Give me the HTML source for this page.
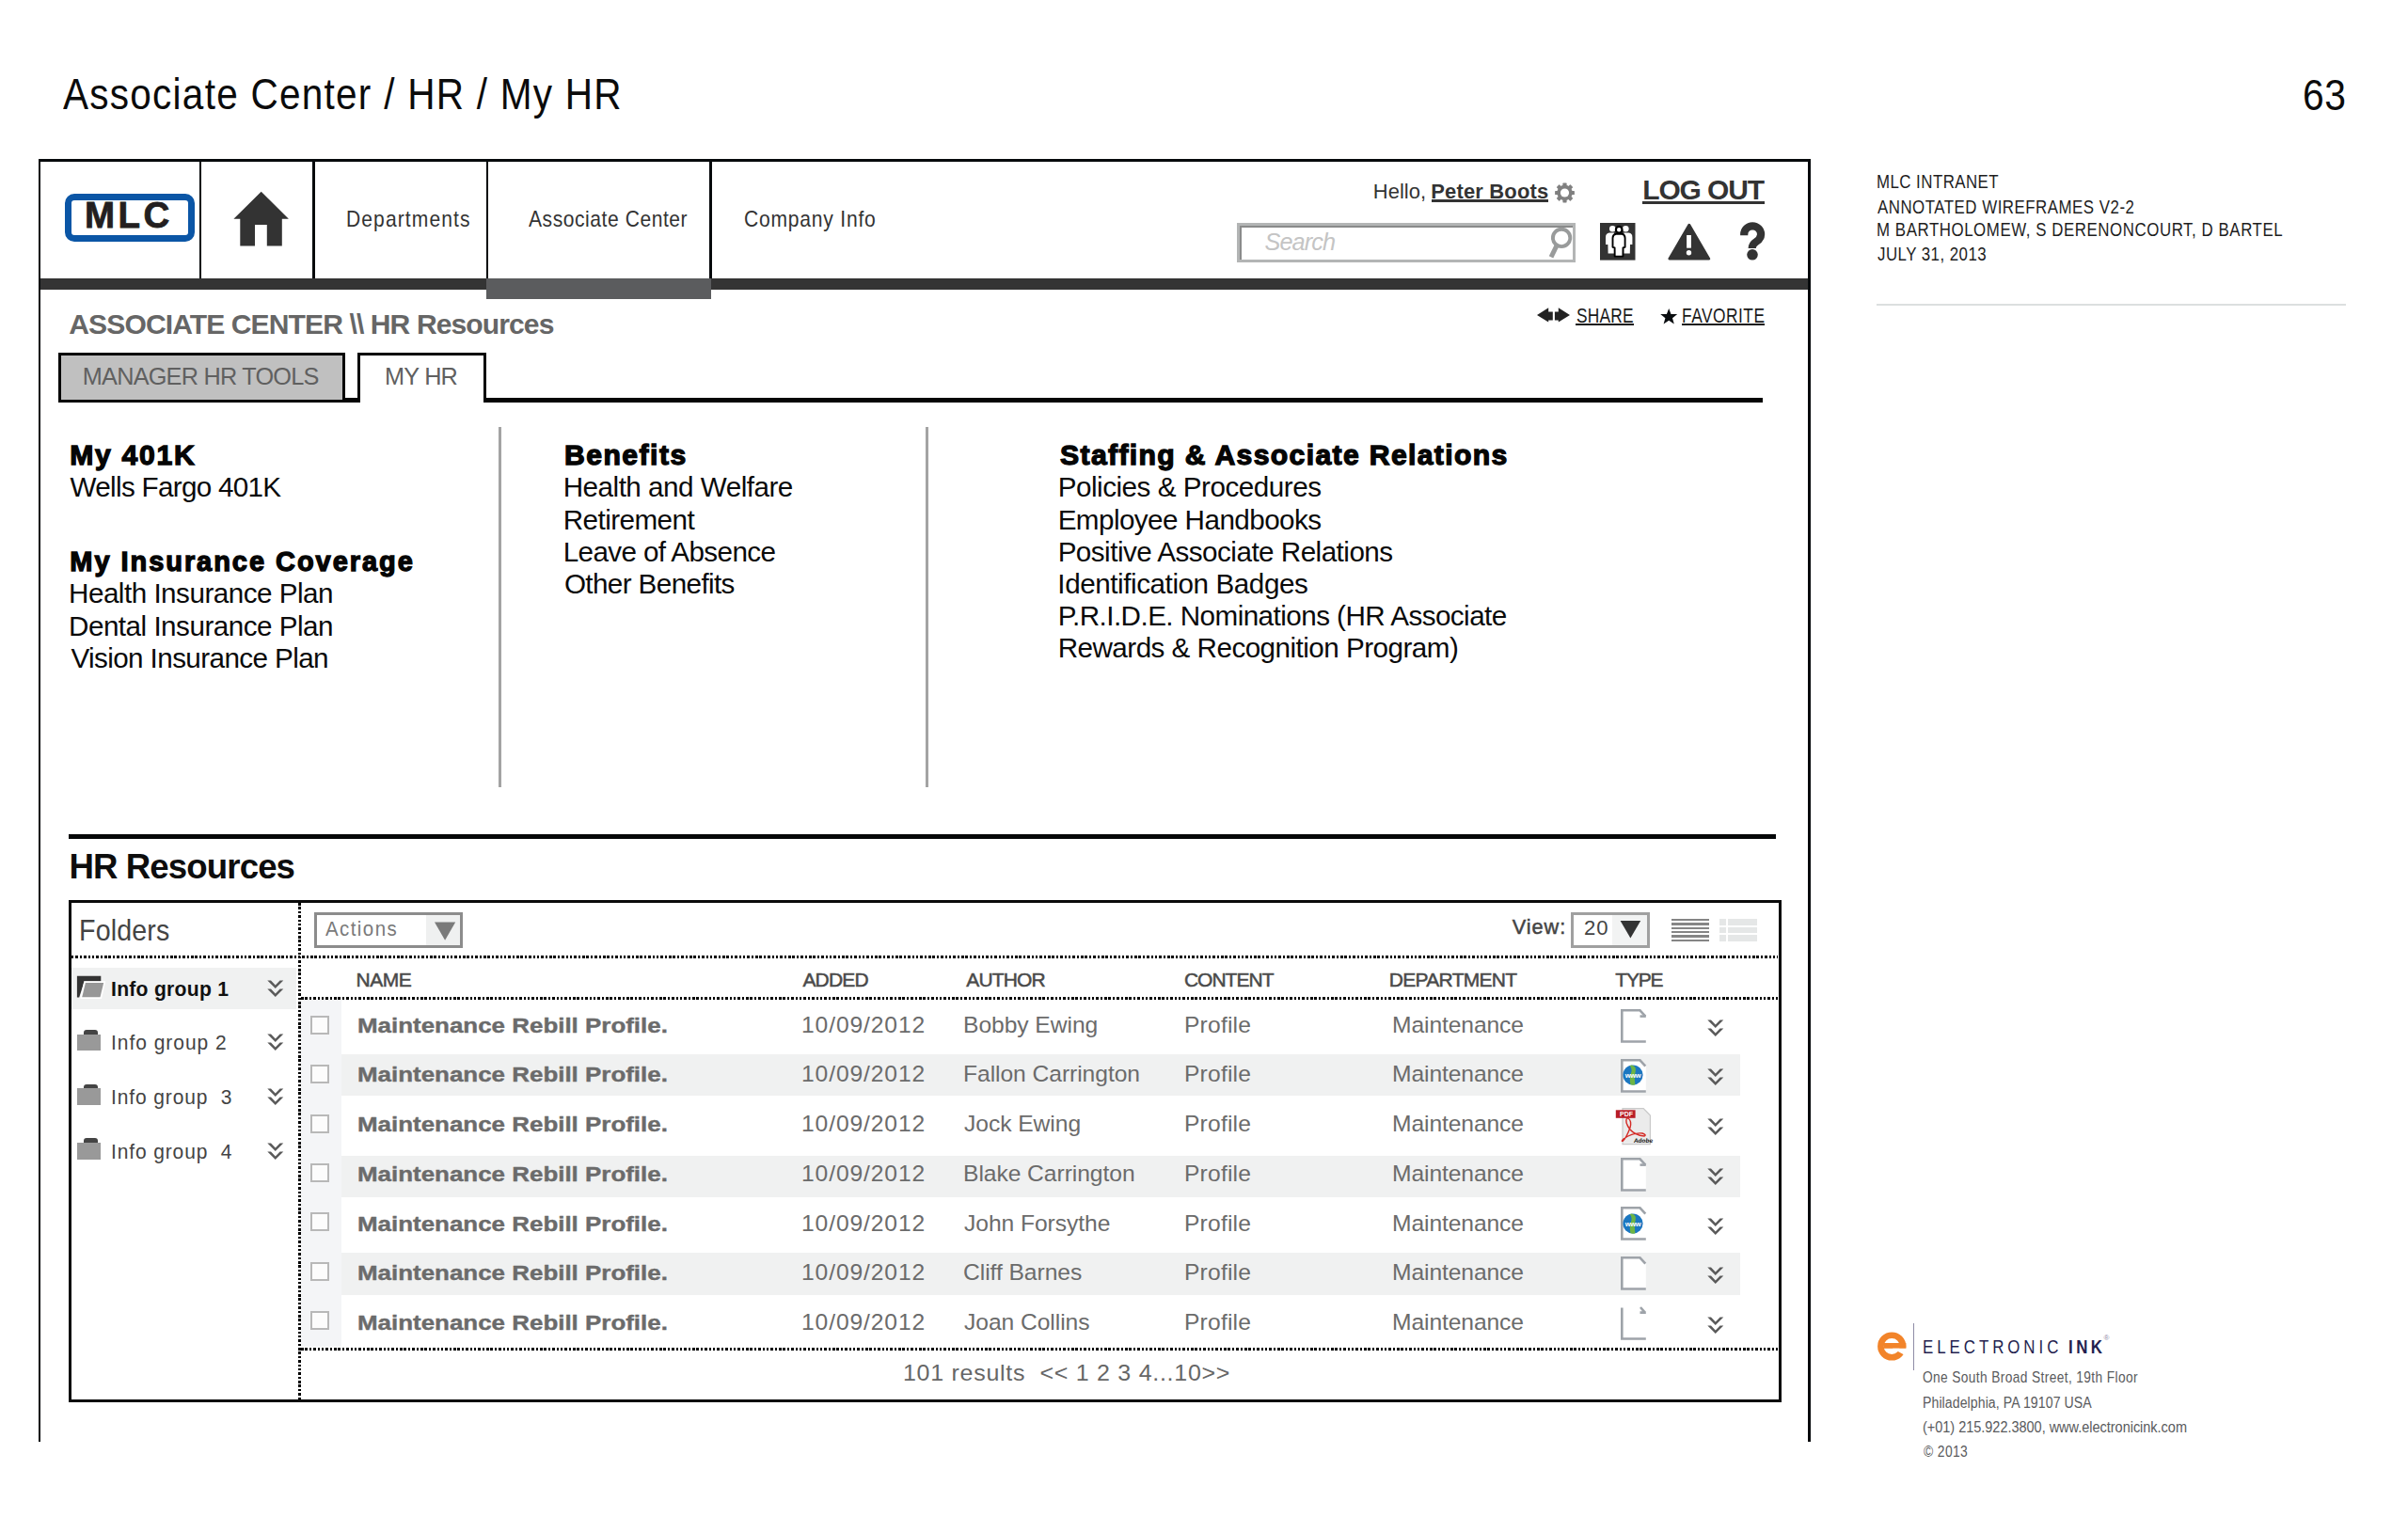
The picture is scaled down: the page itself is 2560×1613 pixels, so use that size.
<!DOCTYPE html>
<html><head><meta charset="utf-8"><title>Associate Center / HR / My HR</title>
<style>
html,body{margin:0;padding:0;background:#fff;}
body{width:2560px;height:1613px;position:relative;overflow:hidden;font-family:"Liberation Sans",sans-serif;}
body>div{position:absolute;box-sizing:content-box;}
.t{white-space:pre;}
</style></head><body>
<div class="t" style="left:67.0px;top:76.44px;font-size:47.09px;line-height:47.09px;letter-spacing:1.477px;color:#0b0b0b;font-weight:normal;font-style:normal;transform:scaleX(0.86);transform-origin:0 0;">Associate Center / HR / My HR</div>
<div class="t" style="left:2447.56px;top:78.06px;font-size:46.37px;line-height:46.37px;letter-spacing:0.603px;color:#0b0b0b;font-weight:normal;font-style:normal;transform:scaleX(0.88);transform-origin:0 0;">63</div>
<div class="t" style="left:1994.55px;top:183.78px;font-size:19.62px;line-height:19.62px;letter-spacing:0.53px;color:#1e1e1e;font-weight:normal;font-style:normal;transform:scaleX(0.86);transform-origin:0 0;">MLC INTRANET</div>
<div class="t" style="left:1995.9px;top:210.58px;font-size:19.62px;line-height:19.62px;letter-spacing:0.587px;color:#1e1e1e;font-weight:normal;font-style:normal;transform:scaleX(0.86);transform-origin:0 0;">ANNOTATED WIREFRAMES V2-2</div>
<div class="t" style="left:1994.55px;top:235.38px;font-size:19.62px;line-height:19.62px;letter-spacing:0.649px;color:#1e1e1e;font-weight:normal;font-style:normal;transform:scaleX(0.86);transform-origin:0 0;">M BARTHOLOMEW, S DERENONCOURT, D BARTEL</div>
<div class="t" style="left:1995.73px;top:261.18px;font-size:19.62px;line-height:19.62px;letter-spacing:0.542px;color:#1e1e1e;font-weight:normal;font-style:normal;transform:scaleX(0.86);transform-origin:0 0;">JULY 31, 2013</div>
<div style="left:1995.00px;top:322.60px;width:499.00px;height:2.20px;background:#dcdfdf;"></div>
<svg style="position:absolute;left:1990px;top:1400px" width="60" height="60" viewBox="1990 1400 60 60">
<path d="M2026.3 1431.5 A15.1 15.1 0 1 1 1996.1 1431.5 A15.1 15.1 0 1 1 2026.3 1431.5 Z M2019.7 1431.5 A8.5 8.5 0 1 0 2002.7 1431.5 A8.5 8.5 0 1 0 2019.7 1431.5 Z" fill="#f2842a" fill-rule="evenodd"/>
<rect x="2002.4" y="1428" width="24" height="5.8" fill="#f2842a"/>
<path d="M2012 1433.8 L2032 1433.8 L2032 1444.8 Z" fill="#fff"/>
</svg>
<div style="left:2033.80px;top:1406.50px;width:1.40px;height:50.20px;background:#8f8ca6;"></div>
<div class="t" style="left:2043.65px;top:1423.05px;font-size:19.62px;line-height:19.62px;letter-spacing:4.603px;color:#241f4f;font-weight:normal;font-style:normal;transform:scaleX(0.86);transform-origin:0 0;">ELECTRONIC</div>
<div class="t" style="left:2198.99px;top:1422.83px;font-size:19.62px;line-height:19.62px;letter-spacing:4.062px;color:#241f4f;font-weight:bold;font-style:normal;transform:scaleX(0.86);transform-origin:0 0;">INK</div>
<div class="t" style="left:2236.5px;top:1419px;font-size:8px;line-height:8px;color:#8f8ca6">&#174;</div>
<div class="t" style="left:2044.45px;top:1457.35px;font-size:15.99px;line-height:15.99px;letter-spacing:0.431px;color:#5a5b5d;font-weight:normal;font-style:normal;transform:scaleX(0.86);transform-origin:0 0;">One South Broad Street, 19th Floor</div>
<div class="t" style="left:2043.87px;top:1482.60px;font-size:16.42px;line-height:16.42px;letter-spacing:0.089px;color:#5a5b5d;font-weight:normal;font-style:normal;transform:scaleX(0.86);transform-origin:0 0;">Philadelphia, PA 19107 USA</div>
<div class="t" style="left:2044.13px;top:1510.07px;font-size:16.86px;line-height:16.86px;letter-spacing:-0.021px;color:#5a5b5d;font-weight:normal;font-style:normal;transform:scaleX(0.86);transform-origin:0 0;">(+01) 215.922.3800, www.electronicink.com</div>
<div class="t" style="left:2044.86px;top:1534.62px;font-size:16.13px;line-height:16.13px;letter-spacing:0.441px;color:#5a5b5d;font-weight:normal;font-style:normal;transform:scaleX(0.86);transform-origin:0 0;">© 2013</div>
<div style="left:40.50px;top:169.00px;width:2.50px;height:1364.00px;background:#070a0c;"></div>
<div style="left:40.50px;top:169.00px;width:1884.50px;height:3.00px;background:#070a0c;"></div>
<div style="left:1922.00px;top:169.00px;width:3.00px;height:1364.00px;background:#070a0c;"></div>
<div style="left:211.50px;top:172.00px;width:2.60px;height:124.50px;background:#070a0c;"></div>
<div style="left:332.00px;top:172.00px;width:2.60px;height:124.50px;background:#070a0c;"></div>
<div style="left:516.50px;top:172.00px;width:2.60px;height:124.50px;background:#070a0c;"></div>
<div style="left:754.00px;top:172.00px;width:2.60px;height:124.50px;background:#070a0c;"></div>
<div style="left:43.00px;top:296.20px;width:1879.00px;height:11.40px;background:#343434;"></div>
<div style="left:516.50px;top:296.20px;width:239.50px;height:21.80px;background:#5b5c5e;"></div>
<div style="left:69px;top:205.9px;width:124.4px;height:37.3px;border:7px solid #0b56a6;border-radius:10px;background:#fff"></div>
<div class="t" style="left:90.09px;top:209.96px;font-size:38.52px;line-height:38.52px;letter-spacing:3.368px;color:#231f20;font-weight:bold;font-style:normal;-webkit-text-stroke:0.8px currentColor;">MLC</div>
<svg style="position:absolute;left:240px;top:195px" width="80" height="80" viewBox="240 195 80 80">
<path d="M277.7 203.7 L306.9 232.8 L299.8 232.8 L299.8 261.5 L283.8 261.5 L283.8 239 L271 239 L271 261.5 L255.3 261.5 L255.3 232.8 L248.4 232.8 Z" fill="#333"/></svg>
<div class="t" style="left:367.52px;top:222.05px;font-size:23.4px;line-height:23.4px;letter-spacing:1.228px;color:#333;font-weight:normal;font-style:normal;transform:scaleX(0.9);transform-origin:0 0;">Departments</div>
<div class="t" style="left:561.8px;top:222.05px;font-size:23.4px;line-height:23.4px;letter-spacing:0.615px;color:#333;font-weight:normal;font-style:normal;transform:scaleX(0.9);transform-origin:0 0;">Associate Center</div>
<div class="t" style="left:790.55px;top:222.05px;font-size:23.4px;line-height:23.4px;letter-spacing:0.878px;color:#333;font-weight:normal;font-style:normal;transform:scaleX(0.9);transform-origin:0 0;">Company Info</div>
<div class="t" style="left:1459.74px;top:192.61px;font-size:21.95px;line-height:21.95px;letter-spacing:0.074px;color:#333;font-weight:normal;font-style:normal;">Hello,</div>
<div class="t" style="left:1521.28px;top:192.61px;font-size:21.95px;line-height:21.95px;letter-spacing:0.183px;color:#333;font-weight:bold;font-style:normal;">Peter Boots</div>
<div style="left:1522.00px;top:212.40px;width:124.00px;height:2.20px;background:#333;"></div>
<svg style="position:absolute;left:1650px;top:192px" width="28" height="28" viewBox="1650 192 28 28">
<g transform="translate(1663.5 205)" fill="#808080">
<circle r="8.2"/>
<rect x="-2.1" y="-10.4" width="4.2" height="4" rx="0.6" transform="rotate(0)"/><rect x="-2.1" y="-10.4" width="4.2" height="4" rx="0.6" transform="rotate(45)"/><rect x="-2.1" y="-10.4" width="4.2" height="4" rx="0.6" transform="rotate(90)"/><rect x="-2.1" y="-10.4" width="4.2" height="4" rx="0.6" transform="rotate(135)"/><rect x="-2.1" y="-10.4" width="4.2" height="4" rx="0.6" transform="rotate(180)"/><rect x="-2.1" y="-10.4" width="4.2" height="4" rx="0.6" transform="rotate(225)"/><rect x="-2.1" y="-10.4" width="4.2" height="4" rx="0.6" transform="rotate(270)"/><rect x="-2.1" y="-10.4" width="4.2" height="4" rx="0.6" transform="rotate(315)"/>
</g><circle cx="1663.5" cy="205" r="4.6" fill="#fff"/></svg>
<div class="t" style="left:1746.2px;top:186.84px;font-size:29.94px;line-height:29.94px;letter-spacing:-1.095px;color:#333;font-weight:bold;font-style:normal;">LOG OUT</div>
<div style="left:1745.80px;top:214.10px;width:130.20px;height:2.70px;background:#333;"></div>
<div style="left:1315.00px;top:237.00px;width:359.60px;height:41.80px;background:#b3b5b5;"></div>
<div style="left:1318.00px;top:240.00px;width:353.60px;height:35.80px;background:#ffffff;"></div>
<div style="left:1318.00px;top:240.00px;width:353.60px;height:2.20px;background:#8a8b8b;"></div>
<div style="left:1318.00px;top:240.00px;width:2.20px;height:35.80px;background:#8a8b8b;"></div>
<div class="t" style="left:1344.39px;top:245.26px;font-size:25.29px;line-height:25.29px;letter-spacing:-0.862px;color:#c4c4c4;font-weight:normal;font-style:italic;">Search</div>
<svg style="position:absolute;left:1640px;top:238px" width="36" height="40" viewBox="1640 238 36 40">
<circle cx="1660.1" cy="252.9" r="9.2" fill="none" stroke="#999b9b" stroke-width="3.9"/>
<line x1="1655" y1="261.2" x2="1649" y2="273.4" stroke="#999b9b" stroke-width="5"/></svg>
<svg style="position:absolute;left:1700px;top:236px" width="40" height="42" viewBox="1700 236 40 42">
<rect x="1701" y="237" width="37.5" height="39.6" fill="#333"/>
<g fill="#fff">
<circle cx="1714.3" cy="243.3" r="3.3"/><path d="M1711 247.6 Q1707 248 1707 252.4 L1707 259.9 L1709.4 259.9 L1709.6 269.4 L1716.2 269.4 L1716.2 247.6 Z"/>
<circle cx="1728.3" cy="243.3" r="3.3"/><path d="M1731.6 247.6 Q1735.4 248 1735.4 252.4 L1735.4 259.9 L1733 259.9 L1732.8 269.4 L1726.2 269.4 L1726.2 247.6 Z"/>
</g>
<circle cx="1721.2" cy="244.2" r="3.3" fill="#fff" stroke="#000" stroke-width="2.2"/>
<path d="M1718 248.8 Q1714.6 249.4 1714.5 253 L1714.5 262.8 L1716.6 263.4 L1716.7 272.6 L1725.4 272.6 L1725.5 263.4 L1727.6 262.8 L1727.6 253 Q1727.5 249.4 1724.4 248.8 Z" fill="#fff" stroke="#000" stroke-width="1.9" stroke-linejoin="round"/>
</svg>
<svg style="position:absolute;left:1770px;top:234px" width="52" height="46" viewBox="1770 234 52 46">
<path d="M1795.8 239 L1816.9 275.1 L1774.7 275.1 Z" fill="#333" stroke="#333" stroke-width="2.6" stroke-linejoin="round"/>
<rect x="1793.1" y="250" width="4.8" height="13.7" fill="#fff"/>
<circle cx="1795.5" cy="268.8" r="2.7" fill="#fff"/></svg>
<svg style="position:absolute;left:1845px;top:232px" width="36" height="46" viewBox="1845 232 36 46">
<path d="M1854.2 250.2 L1854.2 249.3 A8.95 8.95 0 0 1 1872.1 249.3 C1872.1 253.8 1869.4 255.6 1866.6 257.4 C1863.9 259.2 1862.7 260.4 1862.7 264" fill="none" stroke="#333" stroke-width="8.2"/>
<circle cx="1863" cy="270.8" r="5.8" fill="#333"/></svg>
<div class="t" style="left:73.3px;top:329.52px;font-size:30.09px;line-height:30.09px;letter-spacing:-0.909px;color:#666;font-weight:bold;font-style:normal;">ASSOCIATE CENTER \\ HR Resources</div>
<svg style="position:absolute;left:1630px;top:324px" width="44" height="22" viewBox="1630 324 44 22">
<path d="M1634 335 L1646.2 327.3 L1646.2 331.6 L1650.8 331.6 L1650.8 340.4 L1646.2 340.4 L1646.2 342.6 Z" fill="#222"/>
<path d="M1669 335 L1656.8 327.3 L1656.8 331.6 L1652.9 331.6 L1652.9 340.4 L1656.8 340.4 L1656.8 342.6 Z" fill="#222"/>
</svg>
<div class="t" style="left:1675.91px;top:325.15px;font-size:21.66px;line-height:21.66px;letter-spacing:0.232px;color:#1a1a1a;font-weight:normal;font-style:normal;transform:scaleX(0.8);transform-origin:0 0;">SHARE</div>
<div style="left:1675.00px;top:344.20px;width:62.00px;height:1.40px;background:#1a1a1a;"></div>
<svg style="position:absolute;left:1762px;top:325px" width="24" height="22" viewBox="1762 325 24 22">
<path d="M1774.2 327.9 L1776.5 333.9 L1783.2 334 L1778 338.2 L1779.8 344.4 L1774.2 340.8 L1768.6 344.4 L1770.4 338.2 L1765.2 334 L1771.9 333.9 Z" fill="#0a0d10"/></svg>
<div class="t" style="left:1787.91px;top:325.15px;font-size:21.66px;line-height:21.66px;letter-spacing:0.649px;color:#1a1a1a;font-weight:normal;font-style:normal;transform:scaleX(0.8);transform-origin:0 0;">FAVORITE</div>
<div style="left:1788.30px;top:344.20px;width:87.70px;height:1.40px;background:#1a1a1a;"></div>
<div style="left:62.3px;top:374.8px;width:299px;height:47.4px;border:3px solid #050505;background:#c0c0c0"></div>
<div class="t" style="left:87.78px;top:387.53px;font-size:25.29px;line-height:25.29px;letter-spacing:-0.771px;color:#606060;font-weight:normal;font-style:normal;">MANAGER HR TOOLS</div>
<div style="left:380.40px;top:374.80px;width:136.60px;height:2.80px;background:#050505;"></div>
<div style="left:380.40px;top:374.80px;width:2.80px;height:53.40px;background:#050505;"></div>
<div style="left:514.20px;top:374.80px;width:2.80px;height:53.40px;background:#050505;"></div>
<div style="left:367.00px;top:423.10px;width:16.20px;height:5.10px;background:#050505;"></div>
<div style="left:514.20px;top:423.10px;width:1359.80px;height:5.30px;background:#050505;"></div>
<div class="t" style="left:408.98px;top:387.51px;font-size:25.29px;line-height:25.29px;letter-spacing:-0.775px;color:#606060;font-weight:normal;font-style:normal;">MY HR</div>
<div class="t" style="left:74.24px;top:469.34px;font-size:30.16px;line-height:30.16px;letter-spacing:1.7px;color:#050505;font-weight:bold;font-style:normal;-webkit-text-stroke:1.3px currentColor;">My 401K</div>
<div class="t" style="left:74.31px;top:582.73px;font-size:29.0px;line-height:29.0px;letter-spacing:1.948px;color:#050505;font-weight:bold;font-style:normal;-webkit-text-stroke:1.3px currentColor;">My Insurance Coverage</div>
<div class="t" style="left:599.94px;top:469.34px;font-size:30.16px;line-height:30.16px;letter-spacing:1.473px;color:#050505;font-weight:bold;font-style:normal;-webkit-text-stroke:1.3px currentColor;">Benefits</div>
<div class="t" style="left:1127.05px;top:469.14px;font-size:30.16px;line-height:30.16px;letter-spacing:1.344px;color:#050505;font-weight:bold;font-style:normal;-webkit-text-stroke:1.3px currentColor;">Staffing &amp; Associate Relations</div>
<div class="t" style="left:74.6px;top:503.41px;font-size:29.65px;line-height:29.65px;letter-spacing:-0.701px;color:#0a0a0a;font-weight:normal;font-style:normal;">Wells Fargo 401K</div>
<div class="t" style="left:73.03px;top:616.41px;font-size:29.65px;line-height:29.65px;letter-spacing:-0.506px;color:#0a0a0a;font-weight:normal;font-style:normal;">Health Insurance Plan</div>
<div class="t" style="left:73.03px;top:650.61px;font-size:29.65px;line-height:29.65px;letter-spacing:-0.506px;color:#0a0a0a;font-weight:normal;font-style:normal;">Dental Insurance Plan</div>
<div class="t" style="left:75.4px;top:685.41px;font-size:29.65px;line-height:29.65px;letter-spacing:-0.6px;color:#0a0a0a;font-weight:normal;font-style:normal;">Vision Insurance Plan</div>
<div class="t" style="left:598.73px;top:503.41px;font-size:29.65px;line-height:29.65px;letter-spacing:-0.508px;color:#0a0a0a;font-weight:normal;font-style:normal;">Health and Welfare</div>
<div class="t" style="left:598.73px;top:537.81px;font-size:29.65px;line-height:29.65px;letter-spacing:-0.556px;color:#0a0a0a;font-weight:normal;font-style:normal;">Retirement</div>
<div class="t" style="left:598.73px;top:572.21px;font-size:29.65px;line-height:29.65px;letter-spacing:-0.629px;color:#0a0a0a;font-weight:normal;font-style:normal;">Leave of Absence</div>
<div class="t" style="left:599.91px;top:605.61px;font-size:29.65px;line-height:29.65px;letter-spacing:-0.612px;color:#0a0a0a;font-weight:normal;font-style:normal;">Other Benefits</div>
<div class="t" style="left:1124.63px;top:503.41px;font-size:29.65px;line-height:29.65px;letter-spacing:-0.475px;color:#0a0a0a;font-weight:normal;font-style:normal;">Policies &amp; Procedures</div>
<div class="t" style="left:1124.63px;top:537.81px;font-size:29.65px;line-height:29.65px;letter-spacing:-0.561px;color:#0a0a0a;font-weight:normal;font-style:normal;">Employee Handbooks</div>
<div class="t" style="left:1124.63px;top:572.21px;font-size:29.65px;line-height:29.65px;letter-spacing:-0.526px;color:#0a0a0a;font-weight:normal;font-style:normal;">Positive Associate Relations</div>
<div class="t" style="left:1124.33px;top:605.61px;font-size:29.65px;line-height:29.65px;letter-spacing:-0.436px;color:#0a0a0a;font-weight:normal;font-style:normal;">Identification Badges</div>
<div class="t" style="left:1124.63px;top:640.01px;font-size:29.65px;line-height:29.65px;letter-spacing:-0.552px;color:#0a0a0a;font-weight:normal;font-style:normal;">P.R.I.D.E. Nominations (HR Associate</div>
<div class="t" style="left:1124.63px;top:674.41px;font-size:29.65px;line-height:29.65px;letter-spacing:-0.528px;color:#0a0a0a;font-weight:normal;font-style:normal;">Rewards &amp; Recognition Program)</div>
<div style="left:530.00px;top:453.70px;width:2.50px;height:382.90px;background:#a3a3a3;"></div>
<div style="left:984.00px;top:453.70px;width:2.50px;height:382.90px;background:#a3a3a3;"></div>
<div style="left:72.90px;top:886.80px;width:1814.80px;height:4.80px;background:#050708;"></div>
<div class="t" style="left:73.4px;top:904.13px;font-size:36.63px;line-height:36.63px;letter-spacing:-0.888px;color:#0d0d0d;font-weight:bold;font-style:normal;">HR Resources</div>
<div style="left:73.20px;top:956.70px;width:1820.90px;height:2.90px;background:#0a0a0a;"></div>
<div style="left:73.20px;top:956.70px;width:2.80px;height:534.10px;background:#0a0a0a;"></div>
<div style="left:1891.20px;top:956.70px;width:2.90px;height:534.10px;background:#0a0a0a;"></div>
<div style="left:73.20px;top:1488.00px;width:1820.90px;height:2.80px;background:#0a0a0a;"></div>
<div style="left:76.00px;top:1029.20px;width:239.20px;height:43.70px;background:#f0f1f1;"></div>
<div style="left:320.00px;top:1063.00px;width:43.00px;height:369.30px;background:#f4f5f7;"></div>
<div style="left:363.00px;top:1121.00px;width:1487.20px;height:44.40px;background:#f0f1f1;"></div>
<div style="left:363.00px;top:1228.70px;width:1487.20px;height:44.40px;background:#f0f1f1;"></div>
<div style="left:363.00px;top:1332.30px;width:1487.20px;height:44.40px;background:#f0f1f1;"></div>
<div style="left:317px;top:959.6px;width:2.8px;height:528.4px;background:repeating-linear-gradient(180deg,#000 0,#000 2.5px,transparent 2.5px,transparent 4.38px);"></div>
<div style="left:76px;top:1016.1px;width:1813.5px;height:2.8px;background:repeating-linear-gradient(90deg,#000 0,#000 2.5px,transparent 2.5px,transparent 4.38px);"></div>
<div style="left:320px;top:1060.1px;width:1569.5px;height:2.8px;background:repeating-linear-gradient(90deg,#000 0,#000 2.5px,transparent 2.5px,transparent 4.38px);"></div>
<div style="left:320px;top:1433.4px;width:1569.5px;height:2.8px;background:repeating-linear-gradient(90deg,#000 0,#000 2.5px,transparent 2.5px,transparent 4.38px);"></div>
<div class="t" style="left:84.31px;top:973.65px;font-size:31.1px;line-height:31.1px;letter-spacing:0.168px;color:#444;font-weight:normal;font-style:normal;transform:scaleX(0.92);transform-origin:0 0;">Folders</div>
<div style="left:334px;top:970px;width:152.2px;height:31.6px;border:3px solid #8c8c8c;background:#fff"></div>
<div style="left:452.50px;top:973.00px;width:36.70px;height:31.60px;background:#eff0f0;"></div>
<svg style="position:absolute;left:455px;top:975px" width="36" height="30" viewBox="455 975 36 30"><path d="M462 980.6 L484.2 980.6 L473.1 999.8 Z" fill="#7a7a7a"/></svg>
<div class="t" style="left:346.4px;top:976.82px;font-size:22.24px;line-height:22.24px;letter-spacing:1.562px;color:#7a7a7a;font-weight:normal;font-style:normal;transform:scaleX(0.92);transform-origin:0 0;">Actions</div>
<div class="t" style="left:1607.65px;top:974.84px;font-size:21.73px;line-height:21.73px;letter-spacing:0.991px;color:#444;font-weight:normal;font-style:normal;-webkit-text-stroke:0.5px currentColor;">View:</div>
<div style="left:1670px;top:970px;width:77.7px;height:31.6px;border:3px solid #a0a0a0;background:#fff"></div>
<div style="left:1713.80px;top:973.00px;width:36.90px;height:31.60px;background:#f2f3f3;"></div>
<div class="t" style="left:1683.9px;top:975.97px;font-size:22.09px;line-height:22.09px;letter-spacing:1.029px;color:#444;font-weight:normal;font-style:normal;">20</div>
<svg style="position:absolute;left:1718px;top:975px" width="30" height="26" viewBox="1718 975 30 26"><path d="M1722.6 979 L1744.2 979 L1733.4 997.6 Z" fill="#333"/></svg>
<div style="left:1777.30px;top:977.00px;width:40.20px;height:2.20px;background:#858585;"></div>
<div style="left:1777.30px;top:981.33px;width:40.20px;height:2.20px;background:#858585;"></div>
<div style="left:1777.30px;top:985.66px;width:40.20px;height:2.20px;background:#858585;"></div>
<div style="left:1777.30px;top:989.99px;width:40.20px;height:2.20px;background:#858585;"></div>
<div style="left:1777.30px;top:994.32px;width:40.20px;height:2.20px;background:#858585;"></div>
<div style="left:1777.30px;top:998.65px;width:40.20px;height:2.20px;background:#858585;"></div>
<div style="left:1828.10px;top:977.00px;width:6.80px;height:6.70px;background:#e5e7e7;"></div>
<div style="left:1836.70px;top:977.00px;width:31.40px;height:6.70px;background:#e5e7e7;"></div>
<div style="left:1828.10px;top:985.50px;width:6.80px;height:6.70px;background:#e5e7e7;"></div>
<div style="left:1836.70px;top:985.50px;width:31.40px;height:6.70px;background:#e5e7e7;"></div>
<div style="left:1828.10px;top:994.00px;width:6.80px;height:6.70px;background:#e5e7e7;"></div>
<div style="left:1836.70px;top:994.00px;width:31.40px;height:6.70px;background:#e5e7e7;"></div>
<svg style="position:absolute;left:78px;top:1034px" width="38" height="32" viewBox="78 1034 38 32">
<path d="M81.9 1037.8 L107.3 1037.8 L107.3 1043.6 L89.6 1043.6 L84.2 1060.6 L81.9 1060.6 Z" fill="#333"/>
<path d="M85.2 1062 L108 1062 L112.3 1043.2 L89.3 1043.2 Z" fill="#fff"/>
<path d="M87.2 1060.2 L106.5 1060.2 L110.2 1045 L90.9 1045 Z" fill="#979797"/></svg>
<div class="t" style="left:118.43px;top:1039.55px;font-size:22.97px;line-height:22.97px;letter-spacing:0.283px;color:#111;font-weight:bold;font-style:normal;transform:scaleX(0.92);transform-origin:0 0;">Info group 1</div>
<svg style="position:absolute;left:281.8px;top:1040.2px" width="22" height="23" viewBox="281.8 1040.2 22 23"><polygon points="284.10,1042.70 287.80,1042.70 292.60,1047.60 297.40,1042.70 301.10,1042.70 292.55,1051.20" fill="#5a5a5a"/><polygon points="284.10,1051.70 287.80,1051.70 292.60,1056.60 297.40,1051.70 301.10,1051.70 292.55,1060.20" fill="#5a5a5a"/></svg>
<div style="left:88.9px;top:1095.00px;width:15.6px;height:7px;background:#444;border-radius:3px 3px 0 0"></div>
<div style="left:81.90px;top:1099.70px;width:25.00px;height:17.50px;background:#999;"></div>
<div class="t" style="left:117.81px;top:1096.91px;font-size:22.82px;line-height:22.82px;letter-spacing:1.048px;color:#444;font-weight:normal;font-style:normal;transform:scaleX(0.92);transform-origin:0 0;">Info group 2</div>
<svg style="position:absolute;left:281.8px;top:1097.2px" width="22" height="23" viewBox="281.8 1097.2 22 23"><polygon points="284.10,1099.70 287.80,1099.70 292.60,1104.60 297.40,1099.70 301.10,1099.70 292.55,1108.20" fill="#5a5a5a"/><polygon points="284.10,1108.70 287.80,1108.70 292.60,1113.60 297.40,1108.70 301.10,1108.70 292.55,1117.20" fill="#5a5a5a"/></svg>
<div style="left:88.9px;top:1152.70px;width:15.6px;height:7px;background:#444;border-radius:3px 3px 0 0"></div>
<div style="left:81.90px;top:1157.40px;width:25.00px;height:17.50px;background:#999;"></div>
<div class="t" style="left:117.81px;top:1154.71px;font-size:22.82px;line-height:22.82px;letter-spacing:0.966px;color:#444;font-weight:normal;font-style:normal;transform:scaleX(0.92);transform-origin:0 0;">Info group  3</div>
<svg style="position:absolute;left:281.8px;top:1154.9px" width="22" height="23" viewBox="281.8 1154.9 22 23"><polygon points="284.10,1157.40 287.80,1157.40 292.60,1162.30 297.40,1157.40 301.10,1157.40 292.55,1165.90" fill="#5a5a5a"/><polygon points="284.10,1166.40 287.80,1166.40 292.60,1171.30 297.40,1166.40 301.10,1166.40 292.55,1174.90" fill="#5a5a5a"/></svg>
<div style="left:88.9px;top:1210.40px;width:15.6px;height:7px;background:#444;border-radius:3px 3px 0 0"></div>
<div style="left:81.90px;top:1215.10px;width:25.00px;height:17.50px;background:#999;"></div>
<div class="t" style="left:117.81px;top:1212.51px;font-size:22.82px;line-height:22.82px;letter-spacing:0.947px;color:#444;font-weight:normal;font-style:normal;transform:scaleX(0.92);transform-origin:0 0;">Info group  4</div>
<svg style="position:absolute;left:281.8px;top:1212.6000000000001px" width="22" height="23" viewBox="281.8 1212.6000000000001 22 23"><polygon points="284.10,1215.10 287.80,1215.10 292.60,1220.00 297.40,1215.10 301.10,1215.10 292.55,1223.60" fill="#5a5a5a"/><polygon points="284.10,1224.10 287.80,1224.10 292.60,1229.00 297.40,1224.10 301.10,1224.10 292.55,1232.60" fill="#5a5a5a"/></svg>
<div class="t" style="left:378.57px;top:1030.67px;font-size:21.0px;line-height:21.0px;letter-spacing:-0.508px;color:#4a4a4a;font-weight:normal;font-style:normal;-webkit-text-stroke:0.5px currentColor;">NAME</div>
<div class="t" style="left:853.45px;top:1030.67px;font-size:21.0px;line-height:21.0px;letter-spacing:-0.834px;color:#4a4a4a;font-weight:normal;font-style:normal;-webkit-text-stroke:0.5px currentColor;">ADDED</div>
<div class="t" style="left:1027.25px;top:1030.68px;font-size:21.0px;line-height:21.0px;letter-spacing:-0.858px;color:#4a4a4a;font-weight:normal;font-style:normal;-webkit-text-stroke:0.5px currentColor;">AUTHOR</div>
<div class="t" style="left:1258.9px;top:1030.67px;font-size:21.0px;line-height:21.0px;letter-spacing:-0.987px;color:#4a4a4a;font-weight:normal;font-style:normal;-webkit-text-stroke:0.5px currentColor;">CONTENT</div>
<div class="t" style="left:1476.87px;top:1030.67px;font-size:21.0px;line-height:21.0px;letter-spacing:-0.726px;color:#4a4a4a;font-weight:normal;font-style:normal;-webkit-text-stroke:0.5px currentColor;">DEPARTMENT</div>
<div class="t" style="left:1717.33px;top:1030.68px;font-size:21.0px;line-height:21.0px;letter-spacing:-1.22px;color:#4a4a4a;font-weight:normal;font-style:normal;-webkit-text-stroke:0.5px currentColor;">TYPE</div>
<div class="t" style="left:379.64px;top:1078.66px;font-size:22.97px;line-height:22.97px;letter-spacing:-0.014px;color:#6b6b6b;font-weight:bold;font-style:normal;-webkit-text-stroke:0.4px currentColor;transform:scaleX(1.13);transform-origin:0 0;">Maintenance Rebill Profile.</div>
<div class="t" style="left:851.87px;top:1079.17px;font-size:23.26px;line-height:23.26px;letter-spacing:0.827px;color:#6b6b6b;font-weight:normal;font-style:normal;transform:scaleX(1.06);transform-origin:0 0;">10/09/2012</div>
<div class="t" style="left:1023.73px;top:1079.17px;font-size:23.26px;line-height:23.26px;letter-spacing:-0.059px;color:#6b6b6b;font-weight:normal;font-style:normal;transform:scaleX(1.06);transform-origin:0 0;">Bobby Ewing</div>
<div class="t" style="left:1258.83px;top:1079.17px;font-size:23.26px;line-height:23.26px;letter-spacing:0.171px;color:#6b6b6b;font-weight:normal;font-style:normal;transform:scaleX(1.06);transform-origin:0 0;">Profile</div>
<div class="t" style="left:1480.03px;top:1079.17px;font-size:23.26px;line-height:23.26px;letter-spacing:-0.103px;color:#6b6b6b;font-weight:normal;font-style:normal;transform:scaleX(1.06);transform-origin:0 0;">Maintenance</div>
<div style="left:330px;top:1080.00px;width:16.2px;height:16px;border:2px solid #b8b8b8;background:#fcfcfc"></div>
<svg style="position:absolute;left:1812.6px;top:1081.6px" width="22" height="23" viewBox="1812.6 1081.6 22 23"><polygon points="1814.90,1084.10 1818.60,1084.10 1823.40,1089.00 1828.20,1084.10 1831.90,1084.10 1823.35,1092.60" fill="#5a5a5a"/><polygon points="1814.90,1093.10 1818.60,1093.10 1823.40,1098.00 1828.20,1093.10 1831.90,1093.10 1823.35,1101.60" fill="#5a5a5a"/></svg>
<svg style="position:absolute;left:1720.6px;top:1071.0px" width="32" height="40" viewBox="1720.6 1071.0 32 40"><path d="M1749.3999999999999 1107.5 L1723.8999999999999 1107.5 L1723.8999999999999 1074.3 L1743.1 1074.3 L1748.8999999999999 1080.6" fill="none" stroke="#9ea3a9" stroke-width="2.6"/><path d="M1743.1 1080.6 L1749.3999999999999 1080.6" fill="none" stroke="#9ea3a9" stroke-width="2.6"/></svg>
<div class="t" style="left:379.64px;top:1130.66px;font-size:22.97px;line-height:22.97px;letter-spacing:-0.014px;color:#6b6b6b;font-weight:bold;font-style:normal;-webkit-text-stroke:0.4px currentColor;transform:scaleX(1.13);transform-origin:0 0;">Maintenance Rebill Profile.</div>
<div class="t" style="left:851.87px;top:1131.17px;font-size:23.26px;line-height:23.26px;letter-spacing:0.827px;color:#6b6b6b;font-weight:normal;font-style:normal;transform:scaleX(1.06);transform-origin:0 0;">10/09/2012</div>
<div class="t" style="left:1023.73px;top:1131.17px;font-size:23.26px;line-height:23.26px;letter-spacing:-0.059px;color:#6b6b6b;font-weight:normal;font-style:normal;transform:scaleX(1.06);transform-origin:0 0;">Fallon Carrington</div>
<div class="t" style="left:1258.83px;top:1131.17px;font-size:23.26px;line-height:23.26px;letter-spacing:0.171px;color:#6b6b6b;font-weight:normal;font-style:normal;transform:scaleX(1.06);transform-origin:0 0;">Profile</div>
<div class="t" style="left:1480.03px;top:1131.17px;font-size:23.26px;line-height:23.26px;letter-spacing:-0.103px;color:#6b6b6b;font-weight:normal;font-style:normal;transform:scaleX(1.06);transform-origin:0 0;">Maintenance</div>
<div style="left:330px;top:1132.35px;width:16.2px;height:16px;border:2px solid #b8b8b8;background:#fcfcfc"></div>
<svg style="position:absolute;left:1812.6px;top:1134.35px" width="22" height="23" viewBox="1812.6 1134.35 22 23"><polygon points="1814.90,1136.85 1818.60,1136.85 1823.40,1141.75 1828.20,1136.85 1831.90,1136.85 1823.35,1145.35" fill="#5a5a5a"/><polygon points="1814.90,1145.85 1818.60,1145.85 1823.40,1150.75 1828.20,1145.85 1831.90,1145.85 1823.35,1154.35" fill="#5a5a5a"/></svg>
<svg style="position:absolute;left:1720.6px;top:1123.6px" width="32" height="40" viewBox="1720.6 1123.6 32 40"><path d="M1722.6 1125.6 L1743.1 1125.6 L1749.3999999999999 1133.1999999999998 L1749.3999999999999 1161.3999999999999 L1722.6 1161.3999999999999 Z" fill="#fff"/><path d="M1749.3999999999999 1160.1 L1723.8999999999999 1160.1 L1723.8999999999999 1126.8999999999999 L1743.1 1126.8999999999999 L1748.8999999999999 1133.1999999999998" fill="none" stroke="#9ea3a9" stroke-width="2.6"/></svg>
<svg style="position:absolute;left:1724.3px;top:1131.1999999999998px" width="24" height="24" viewBox="1724.3 1131.1999999999998 24 24">
<circle cx="1736.3" cy="1143.1999999999998" r="10.6" fill="#1b77c1"/>
<path d="M1735.1 1132.6999999999998 Q1740.5 1133.7999999999997 1738.8999999999999 1140.1999999999998 Q1737.5 1144.6999999999998 1738.7 1153.6 Q1735.3 1154.1999999999998 1733.7 1153.3999999999999 Q1732.3 1146.1999999999998 1734.3 1141.1999999999998 Q1736.1 1137.1999999999998 1732.8999999999999 1133.1999999999998 Z" fill="#6db544"/>
<text x="1736.3" y="1145.7999999999997" text-anchor="middle" font-family="Liberation Sans" font-weight="bold" font-size="7.6" fill="#fff" letter-spacing="-0.4">www</text></svg>
<div class="t" style="left:379.64px;top:1183.66px;font-size:22.97px;line-height:22.97px;letter-spacing:-0.014px;color:#6b6b6b;font-weight:bold;font-style:normal;-webkit-text-stroke:0.4px currentColor;transform:scaleX(1.13);transform-origin:0 0;">Maintenance Rebill Profile.</div>
<div class="t" style="left:851.87px;top:1184.17px;font-size:23.26px;line-height:23.26px;letter-spacing:0.827px;color:#6b6b6b;font-weight:normal;font-style:normal;transform:scaleX(1.06);transform-origin:0 0;">10/09/2012</div>
<div class="t" style="left:1025.45px;top:1184.17px;font-size:23.26px;line-height:23.26px;letter-spacing:-0.059px;color:#6b6b6b;font-weight:normal;font-style:normal;transform:scaleX(1.06);transform-origin:0 0;">Jock Ewing</div>
<div class="t" style="left:1258.83px;top:1184.17px;font-size:23.26px;line-height:23.26px;letter-spacing:0.171px;color:#6b6b6b;font-weight:normal;font-style:normal;transform:scaleX(1.06);transform-origin:0 0;">Profile</div>
<div class="t" style="left:1480.03px;top:1184.17px;font-size:23.26px;line-height:23.26px;letter-spacing:-0.103px;color:#6b6b6b;font-weight:normal;font-style:normal;transform:scaleX(1.06);transform-origin:0 0;">Maintenance</div>
<div style="left:330px;top:1184.70px;width:16.2px;height:16px;border:2px solid #b8b8b8;background:#fcfcfc"></div>
<svg style="position:absolute;left:1812.6px;top:1187.1px" width="22" height="23" viewBox="1812.6 1187.1 22 23"><polygon points="1814.90,1189.60 1818.60,1189.60 1823.40,1194.50 1828.20,1189.60 1831.90,1189.60 1823.35,1198.10" fill="#5a5a5a"/><polygon points="1814.90,1198.60 1818.60,1198.60 1823.40,1203.50 1828.20,1198.60 1831.90,1198.60 1823.35,1207.10" fill="#5a5a5a"/></svg>
<svg style="position:absolute;left:1716px;top:1175.9px" width="42" height="42" viewBox="1716 1175.9 42 42">

<path d="M1725 1178.5 L1747.2 1178.5 L1754.4 1185.9 L1754.4 1216.5 L1725 1216.5 Z" fill="#ebebeb" stroke="#c9c9c9" stroke-width="1.2"/>
<path d="M1717.8 1180.2 L1738.6 1180.2 L1738.6 1188.7 L1717.8 1188.7 Z" fill="#b81d26"/>
<text x="1722" y="1187.3000000000002" font-family="Liberation Sans" font-weight="bold" font-size="7" fill="#fff">PDF</text>
<path d="M1729.5 1188.9 Q1727 1192.9 1733 1200.9 Q1738 1206.9 1748 1207.9 Q1751 1206.9 1746 1204.9 Q1736 1203.9 1726 1210.9 Q1723 1213.9 1725.5 1212.9 Q1729 1209.9 1733 1198.9 Q1735 1191.9 1731 1188.9 Z" fill="none" stroke="#d42a25" stroke-width="1.4"/>
<text x="1737.5" y="1214.9" font-family="Liberation Sans" font-weight="bold" font-size="6.5" fill="#111" transform="skewX(-8)" style="transform-box:fill-box">Adobe</text>
</svg>
<div class="t" style="left:379.64px;top:1236.66px;font-size:22.97px;line-height:22.97px;letter-spacing:-0.014px;color:#6b6b6b;font-weight:bold;font-style:normal;-webkit-text-stroke:0.4px currentColor;transform:scaleX(1.13);transform-origin:0 0;">Maintenance Rebill Profile.</div>
<div class="t" style="left:851.87px;top:1237.17px;font-size:23.26px;line-height:23.26px;letter-spacing:0.827px;color:#6b6b6b;font-weight:normal;font-style:normal;transform:scaleX(1.06);transform-origin:0 0;">10/09/2012</div>
<div class="t" style="left:1023.73px;top:1237.17px;font-size:23.26px;line-height:23.26px;letter-spacing:-0.059px;color:#6b6b6b;font-weight:normal;font-style:normal;transform:scaleX(1.06);transform-origin:0 0;">Blake Carrington</div>
<div class="t" style="left:1258.83px;top:1237.17px;font-size:23.26px;line-height:23.26px;letter-spacing:0.171px;color:#6b6b6b;font-weight:normal;font-style:normal;transform:scaleX(1.06);transform-origin:0 0;">Profile</div>
<div class="t" style="left:1480.03px;top:1237.17px;font-size:23.26px;line-height:23.26px;letter-spacing:-0.103px;color:#6b6b6b;font-weight:normal;font-style:normal;transform:scaleX(1.06);transform-origin:0 0;">Maintenance</div>
<div style="left:330px;top:1237.05px;width:16.2px;height:16px;border:2px solid #b8b8b8;background:#fcfcfc"></div>
<svg style="position:absolute;left:1812.6px;top:1239.85px" width="22" height="23" viewBox="1812.6 1239.85 22 23"><polygon points="1814.90,1242.35 1818.60,1242.35 1823.40,1247.25 1828.20,1242.35 1831.90,1242.35 1823.35,1250.85" fill="#5a5a5a"/><polygon points="1814.90,1251.35 1818.60,1251.35 1823.40,1256.25 1828.20,1251.35 1831.90,1251.35 1823.35,1259.85" fill="#5a5a5a"/></svg>
<svg style="position:absolute;left:1720.6px;top:1228.8px" width="32" height="40" viewBox="1720.6 1228.8 32 40"><path d="M1722.6 1230.8 L1743.1 1230.8 L1749.3999999999999 1238.3999999999999 L1749.3999999999999 1266.6 L1722.6 1266.6 Z" fill="#fff"/><path d="M1749.3999999999999 1265.3 L1723.8999999999999 1265.3 L1723.8999999999999 1232.1 L1743.1 1232.1 L1748.8999999999999 1238.3999999999999" fill="none" stroke="#9ea3a9" stroke-width="2.6"/><path d="M1743.1 1238.3999999999999 L1749.3999999999999 1238.3999999999999" fill="none" stroke="#9ea3a9" stroke-width="2.6"/></svg>
<div class="t" style="left:379.64px;top:1289.66px;font-size:22.97px;line-height:22.97px;letter-spacing:-0.014px;color:#6b6b6b;font-weight:bold;font-style:normal;-webkit-text-stroke:0.4px currentColor;transform:scaleX(1.13);transform-origin:0 0;">Maintenance Rebill Profile.</div>
<div class="t" style="left:851.87px;top:1290.17px;font-size:23.26px;line-height:23.26px;letter-spacing:0.827px;color:#6b6b6b;font-weight:normal;font-style:normal;transform:scaleX(1.06);transform-origin:0 0;">10/09/2012</div>
<div class="t" style="left:1025.45px;top:1290.17px;font-size:23.26px;line-height:23.26px;letter-spacing:-0.059px;color:#6b6b6b;font-weight:normal;font-style:normal;transform:scaleX(1.06);transform-origin:0 0;">John Forsythe</div>
<div class="t" style="left:1258.83px;top:1290.17px;font-size:23.26px;line-height:23.26px;letter-spacing:0.171px;color:#6b6b6b;font-weight:normal;font-style:normal;transform:scaleX(1.06);transform-origin:0 0;">Profile</div>
<div class="t" style="left:1480.03px;top:1290.17px;font-size:23.26px;line-height:23.26px;letter-spacing:-0.103px;color:#6b6b6b;font-weight:normal;font-style:normal;transform:scaleX(1.06);transform-origin:0 0;">Maintenance</div>
<div style="left:330px;top:1289.40px;width:16.2px;height:16px;border:2px solid #b8b8b8;background:#fcfcfc"></div>
<svg style="position:absolute;left:1812.6px;top:1292.6px" width="22" height="23" viewBox="1812.6 1292.6 22 23"><polygon points="1814.90,1295.10 1818.60,1295.10 1823.40,1300.00 1828.20,1295.10 1831.90,1295.10 1823.35,1303.60" fill="#5a5a5a"/><polygon points="1814.90,1304.10 1818.60,1304.10 1823.40,1309.00 1828.20,1304.10 1831.90,1304.10 1823.35,1312.60" fill="#5a5a5a"/></svg>
<svg style="position:absolute;left:1720.6px;top:1281.4px" width="32" height="40" viewBox="1720.6 1281.4 32 40"><path d="M1722.6 1283.4 L1743.1 1283.4 L1749.3999999999999 1291.0 L1749.3999999999999 1319.2 L1722.6 1319.2 Z" fill="#fff"/><path d="M1749.3999999999999 1317.9 L1723.8999999999999 1317.9 L1723.8999999999999 1284.7 L1743.1 1284.7 L1748.8999999999999 1291.0" fill="none" stroke="#9ea3a9" stroke-width="2.6"/></svg>
<svg style="position:absolute;left:1724.3px;top:1289.0px" width="24" height="24" viewBox="1724.3 1289.0 24 24">
<circle cx="1736.3" cy="1301.0" r="10.6" fill="#1b77c1"/>
<path d="M1735.1 1290.5 Q1740.5 1291.6 1738.8999999999999 1298.0 Q1737.5 1302.5 1738.7 1311.4 Q1735.3 1312.0 1733.7 1311.2 Q1732.3 1304.0 1734.3 1299.0 Q1736.1 1295.0 1732.8999999999999 1291.0 Z" fill="#6db544"/>
<text x="1736.3" y="1303.6" text-anchor="middle" font-family="Liberation Sans" font-weight="bold" font-size="7.6" fill="#fff" letter-spacing="-0.4">www</text></svg>
<div class="t" style="left:379.64px;top:1341.66px;font-size:22.97px;line-height:22.97px;letter-spacing:-0.014px;color:#6b6b6b;font-weight:bold;font-style:normal;-webkit-text-stroke:0.4px currentColor;transform:scaleX(1.13);transform-origin:0 0;">Maintenance Rebill Profile.</div>
<div class="t" style="left:851.87px;top:1342.17px;font-size:23.26px;line-height:23.26px;letter-spacing:0.827px;color:#6b6b6b;font-weight:normal;font-style:normal;transform:scaleX(1.06);transform-origin:0 0;">10/09/2012</div>
<div class="t" style="left:1024.47px;top:1342.17px;font-size:23.26px;line-height:23.26px;letter-spacing:-0.059px;color:#6b6b6b;font-weight:normal;font-style:normal;transform:scaleX(1.06);transform-origin:0 0;">Cliff Barnes</div>
<div class="t" style="left:1258.83px;top:1342.17px;font-size:23.26px;line-height:23.26px;letter-spacing:0.171px;color:#6b6b6b;font-weight:normal;font-style:normal;transform:scaleX(1.06);transform-origin:0 0;">Profile</div>
<div class="t" style="left:1480.03px;top:1342.17px;font-size:23.26px;line-height:23.26px;letter-spacing:-0.103px;color:#6b6b6b;font-weight:normal;font-style:normal;transform:scaleX(1.06);transform-origin:0 0;">Maintenance</div>
<div style="left:330px;top:1341.75px;width:16.2px;height:16px;border:2px solid #b8b8b8;background:#fcfcfc"></div>
<svg style="position:absolute;left:1812.6px;top:1345.35px" width="22" height="23" viewBox="1812.6 1345.35 22 23"><polygon points="1814.90,1347.85 1818.60,1347.85 1823.40,1352.75 1828.20,1347.85 1831.90,1347.85 1823.35,1356.35" fill="#5a5a5a"/><polygon points="1814.90,1356.85 1818.60,1356.85 1823.40,1361.75 1828.20,1356.85 1831.90,1356.85 1823.35,1365.35" fill="#5a5a5a"/></svg>
<svg style="position:absolute;left:1720.6px;top:1334.0px" width="32" height="40" viewBox="1720.6 1334.0 32 40"><path d="M1722.6 1336.0 L1743.1 1336.0 L1749.3999999999999 1343.6 L1749.3999999999999 1371.8 L1722.6 1371.8 Z" fill="#fff"/><path d="M1749.3999999999999 1370.5 L1723.8999999999999 1370.5 L1723.8999999999999 1337.3 L1743.1 1337.3 L1748.8999999999999 1343.6" fill="none" stroke="#9ea3a9" stroke-width="2.6"/></svg>
<div class="t" style="left:379.64px;top:1394.66px;font-size:22.97px;line-height:22.97px;letter-spacing:-0.014px;color:#6b6b6b;font-weight:bold;font-style:normal;-webkit-text-stroke:0.4px currentColor;transform:scaleX(1.13);transform-origin:0 0;">Maintenance Rebill Profile.</div>
<div class="t" style="left:851.87px;top:1395.17px;font-size:23.26px;line-height:23.26px;letter-spacing:0.827px;color:#6b6b6b;font-weight:normal;font-style:normal;transform:scaleX(1.06);transform-origin:0 0;">10/09/2012</div>
<div class="t" style="left:1025.45px;top:1395.17px;font-size:23.26px;line-height:23.26px;letter-spacing:-0.059px;color:#6b6b6b;font-weight:normal;font-style:normal;transform:scaleX(1.06);transform-origin:0 0;">Joan Collins</div>
<div class="t" style="left:1258.83px;top:1395.17px;font-size:23.26px;line-height:23.26px;letter-spacing:0.171px;color:#6b6b6b;font-weight:normal;font-style:normal;transform:scaleX(1.06);transform-origin:0 0;">Profile</div>
<div class="t" style="left:1480.03px;top:1395.17px;font-size:23.26px;line-height:23.26px;letter-spacing:-0.103px;color:#6b6b6b;font-weight:normal;font-style:normal;transform:scaleX(1.06);transform-origin:0 0;">Maintenance</div>
<div style="left:330px;top:1394.10px;width:16.2px;height:16px;border:2px solid #b8b8b8;background:#fcfcfc"></div>
<svg style="position:absolute;left:1812.6px;top:1398.1px" width="22" height="23" viewBox="1812.6 1398.1 22 23"><polygon points="1814.90,1400.60 1818.60,1400.60 1823.40,1405.50 1828.20,1400.60 1831.90,1400.60 1823.35,1409.10" fill="#5a5a5a"/><polygon points="1814.90,1409.60 1818.60,1409.60 1823.40,1414.50 1828.20,1409.60 1831.90,1409.60 1823.35,1418.10" fill="#5a5a5a"/></svg>
<svg style="position:absolute;left:1720.6px;top:1386.6px" width="32" height="40" viewBox="1720.6 1386.6 32 40"><path d="M1723.8999999999999 1390.1 L1723.8999999999999 1423.1 L1749.3999999999999 1423.1" fill="none" stroke="#9ea3a9" stroke-width="2.6"/><path d="M1743.6 1389.6 L1748.3999999999999 1395.1999999999998 M1743.1 1395.1999999999998 L1749.3999999999999 1395.1999999999998" fill="none" stroke="#9ea3a9" stroke-width="2.6" stroke-width="2.2"/></svg>
<div class="t" style="left:959.55px;top:1447.81px;font-size:23.84px;line-height:23.84px;letter-spacing:0.675px;color:#666;font-weight:normal;font-style:normal;transform:scaleX(1.05);transform-origin:0 0;">101 results  &lt;&lt; 1 2 3 4...10&gt;&gt;</div>
</body></html>
